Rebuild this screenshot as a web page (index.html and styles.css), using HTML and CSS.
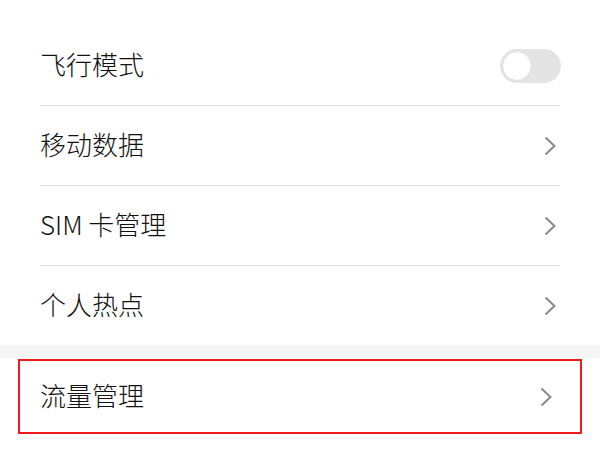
FILE: index.html
```html
<!DOCTYPE html>
<html>
    <head>
        <meta charset="utf-8">
        <title>设置</title>
        <meta name="viewport" content="width=device-width, initial-scale=1">
        <link rel="stylesheet" href="styles.css">
    </head>
    <body>
        <main class="settings">
            <ul class="group">
                <li class="row">
                    <span class="label">飞行模式</span>
                    <span class="switch"><span class="knob"></span></span>
                </li>
                <li class="row">
                    <span class="label">移动数据</span>
                    <svg class="chevron" viewBox="0 0 12 20"><path d="M1.5 1.5 L10.5 10 L1.5 18.5"/></svg>
                </li>
                <li class="row">
                    <span class="label">SIM 卡管理</span>
                    <svg class="chevron" viewBox="0 0 12 20"><path d="M1.5 1.5 L10.5 10 L1.5 18.5"/></svg>
                </li>
                <li class="row last">
                    <span class="label">个人热点</span>
                    <svg class="chevron" viewBox="0 0 12 20"><path d="M1.5 1.5 L10.5 10 L1.5 18.5"/></svg>
                </li>
            </ul>
            <div class="divider"></div>
            <div class="highlight">
                <div class="row">
                    <span class="label">流量管理</span>
                    <svg class="chevron" viewBox="0 0 12 20"><path d="M1.5 1.5 L10.5 10 L1.5 18.5"/></svg>
                </div>
            </div>
        </main>
    </body>
</html>
```

FILE: styles.css
```css
*{
    margin: 0;
    padding: 0;
    box-sizing: border-box;
}
body{
    background-color: #fff;
    font-family: "Noto Sans CJK SC", "Noto Sans", sans-serif;
    color: #111;
}
.settings{
    width: 600px;
    padding-top: 26px;
}
.group{
    list-style: none;
    padding: 0 40px;
}
.row{
    display: flex;
    align-items: center;
    justify-content: space-between;
    height: 80px;
    border-bottom: 1px solid #e3e3e3;
}
.group .row.last{
    height: 79px;
    border-bottom: none;
}
.label{
    font-size: 26px;
    font-weight: 300;
    line-height: 1;
    padding-bottom: 3px;
}
.switch{
    display: flex;
    align-items: center;
    width: 61px;
    height: 34px;
    margin-right: -1px;
    border-radius: 17px;
    background-color: #e4e4e4;
    padding: 2px;
}
.knob{
    width: 30px;
    height: 30px;
    border-radius: 50%;
    background-color: #fff;
    border: 1px solid #dcdcdc;
}
.chevron{
    width: 12px;
    height: 20px;
    margin-right: 4px;
    fill: none;
    stroke: #8a8a8a;
    stroke-width: 2;
}
.divider{
    height: 13px;
    background-color: #f5f5f5;
}
.highlight{
    margin: 1px 18px 0;
    border: 2px solid #f01c1c;
    padding: 0 24px 0 20px;
}
.highlight .row{
    height: 71px;
    border-bottom: none;
}
```
